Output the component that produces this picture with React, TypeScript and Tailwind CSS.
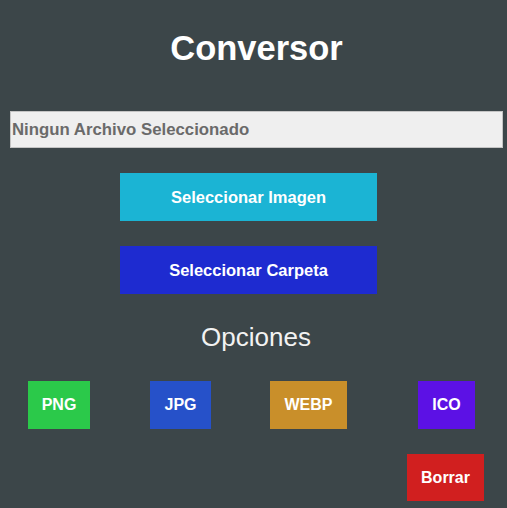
import React from 'react';

const formats = [
  { label: 'PNG', cls: 'ml-[28px] w-[62px] bg-[#2bc94a]' },
  { label: 'JPG', cls: 'ml-[60px] w-[61px] bg-[#2651c9]' },
  { label: 'WEBP', cls: 'ml-[59px] w-[77px] bg-[#c98f2a]' },
  { label: 'ICO', cls: 'ml-[71px] w-[57px] bg-[#5c11e5]' },
];

const App: React.FC = () => {
  return (
    <div className="w-[507px] h-[508px] bg-[#3c4649] flex flex-col font-['Liberation_Sans',Arial,sans-serif] overflow-hidden">
      <h1 className="pt-[28px] pl-[6px] h-[68px] leading-[40px] text-center text-[34.5px] font-bold text-white">Conversor</h1>

      <div className="mt-[43px] ml-[10px] w-[493px] h-[37px] bg-[#efefef] border border-[#c4c4c4] flex items-center pl-[1px]">
        <span className="text-[16.8px] font-bold text-[#6a6a6a]">Ningun Archivo Seleccionado</span>
      </div>

      <button className="mt-[25px] ml-[120px] w-[257px] h-[48px] bg-[#1bb4d4] text-white text-[16.5px] font-bold">
        Seleccionar Imagen
      </button>
      <button className="mt-[25px] ml-[120px] w-[257px] h-[48px] bg-[#1e2bd0] text-white text-[16.5px] font-bold">
        Seleccionar Carpeta
      </button>

      <h2 className="mt-[28px] pl-[5px] h-[30px] leading-[30px] text-center text-[26px] text-[#f2f2f2]">Opciones</h2>

      <div className="mt-[29px] flex h-[48px]">
        {formats.map((f) => (
          <button key={f.label} className={`${f.cls} h-[48px] text-white text-[16px] font-bold`}>
            {f.label}
          </button>
        ))}
      </div>

      <div className="mt-[25px] flex justify-end pr-[23px]">
        <button className="w-[77px] h-[47px] bg-[#d11f1f] text-white text-[16px] font-bold">Borrar</button>
      </div>
    </div>
  );
};

export default App;
